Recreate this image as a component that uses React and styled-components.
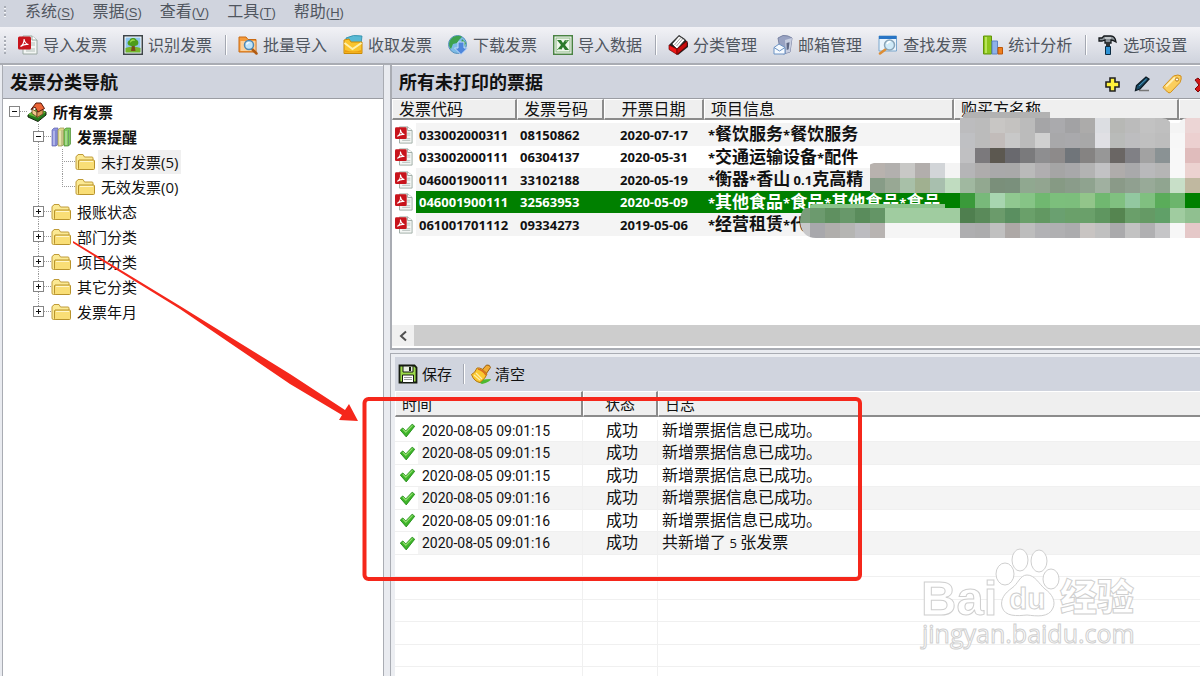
import React from 'react';
import styled, { createGlobalStyle, css } from 'styled-components';

const GlobalStyle = createGlobalStyle`
    * {
        box-sizing: border-box;
    }
    body {
        margin: 0;
        overflow: hidden;
        background: #fff;
        color: #111;
        font-family: "Open Sans", "Noto Sans CJK SC", sans-serif;
        font-size: 15px;
        line-height: 20px;
    }
    button {
        border: 0;
        padding: 0;
        background: none;
        color: inherit;
        font: inherit;
    }
`;

const Window = styled.div`
    position: relative;
    display: flex;
    flex-direction: column;
    height: 100vh;
    overflow: hidden;
    background: #e9ebf0;
`;

// Menu bar
const MenuBar = styled.nav`
    display: flex;
    align-items: center;
    flex-shrink: 0;
    height: 27px;
    padding: 0 4px 4px;
    background: #d0d4de;
    color: #50565f;
    font-size: 16px;
`;

const Grip = styled.span`
    width: 2px;
    height: ${(p) => p.$size}px;
    margin-right: ${(p) => p.$gap}px;
    background: repeating-linear-gradient(#a9adb6 0 2px, #f6f7f9 2px 3px, transparent 3px 4px);
`;

const MenuItem = styled.button`
    padding: 0 9px;
    white-space: nowrap;
`;

const MenuKey = styled.span`
    font-family: "Liberation Sans", sans-serif;
    font-size: 13px;
    u {
        text-underline-offset: 2px;
    }
`;

// Toolbar
const ToolBar = styled.div`
    display: flex;
    align-items: center;
    flex-shrink: 0;
    height: 38px;
    padding-left: 4px;
    border-bottom: 2px solid #a9acb3;
    background: linear-gradient(#f2f2f6, #cfd3dd);
    overflow: hidden;
`;

const ToolButton = styled.button`
    display: flex;
    flex-shrink: 0;
    align-items: center;
    gap: ${(p) => (p.$compact ? 4 : 5)}px;
    padding: 0 ${(p) => (p.$compact ? 3 : 8)}px;
    color: ${(p) => (p.$compact ? '#111' : '#50565f')};
    font-size: ${(p) => (p.$compact ? 15 : 16)}px;
    white-space: nowrap;
`;

const Separator = styled.span`
    flex-shrink: 0;
    width: 2px;
    height: 20px;
    margin: ${(p) => (p.$compact ? '0 3px 0 8px' : '0 3px 0 5px')};
    border-left: 1px solid #a4a8b2;
    border-right: 1px solid #fff;
`;

// Panels
const Workspace = styled.div`
    display: flex;
    flex: 1;
    min-height: 0;
`;

const SidePanel = styled.aside`
    display: flex;
    flex-direction: column;
    flex: 0 0 382px;
    margin-left: 2px;
    border: 1px solid #a9acb3;
    border-width: 0 1px;
    background: #fff;
`;

const PanelTitle = styled.header`
    display: flex;
    align-items: center;
    justify-content: space-between;
    flex-shrink: 0;
    height: 34px;
    padding-left: 7px;
    border-top: 1px solid #fff;
    border-bottom: 1px solid #9b9da3;
    background: #d0d4de;
    h2 {
        margin: 0;
        font-size: 18px;
        font-weight: bold;
        line-height: 24px;
    }
`;

const TitleTools = styled.div`
    display: flex;
    align-items: center;
    gap: 10px;
    margin-right: -12px;
    padding-top: 4px;
    button {
        display: flex;
    }
`;

const MainColumn = styled.main`
    display: flex;
    flex-direction: column;
    flex: 1;
    min-width: 0;
    gap: 3px;
    margin-left: 6px;
`;

const ListPanel = styled.section`
    position: relative;
    flex-shrink: 0;
    border-left: 2px solid #a9acb3;
    border-bottom: 2px solid #a9acb3;
    background: #fff;
    overflow: hidden;
`;

const LogPanel = styled.section`
    flex: 1;
    min-height: 0;
    padding: 3px 0 0 4px;
    border: 1px solid #a9acb3;
    border-width: 1px 0 0 1px;
    background: #eceef2;
    overflow: hidden;
`;

const LogBar = styled.div`
    display: flex;
    align-items: center;
    height: 34px;
    background: #d0d4de;
`;

// Tree
const Tree = styled.ul`
    margin: 0;
    padding: 0 0 0 6px;
    list-style: none;
`;

const TreeRow = styled.li`
    display: flex;
    align-items: center;
    height: 25px;
`;

const dotsDown = 'repeating-linear-gradient(#9a9a9a 0 1px, transparent 1px 2px)';
const dotsAcross = 'repeating-linear-gradient(90deg, #9a9a9a 0 1px, transparent 1px 2px)';

const Guide = styled.span`
    width: 24px;
    height: 25px;
    background: ${(p) => (p.$blank ? 'none' : `${dotsDown} 5px 0 / 1px 100% no-repeat`)};
`;

const Branch = styled.span`
    display: flex;
    align-items: center;
    width: 18px;
    height: 25px;
    background-repeat: no-repeat;
    background-image: ${dotsAcross}${(p) => (p.$line ? `, ${dotsDown}` : '')};
    background-position: 5px 12px, 5px 0;
    background-size: 13px 1px, 1px ${(p) => (p.$line === 'half' ? '12px' : '100%')};
`;

const Expander = styled.button`
    width: 11px;
    height: 11px;
    border: 1px solid #858585;
    background:
        linear-gradient(#111, #111) center / 5px 1px no-repeat,
        linear-gradient(#111, #111) center / ${(p) => (p.$open ? '0 0' : '1px 5px')} no-repeat,
        #fff;
`;

const TreeLabel = styled.span`
    margin-left: 3px;
    padding: 0 3px;
    font-weight: ${(p) => (p.$bold ? 'bold' : 'normal')};
    line-height: 24px;
    background: ${(p) => (p.$selected ? '#f0f0f0' : 'transparent')};
`;

const Latin = styled.span`
    font-size: 13px;
`;

// Tables
const ListView = styled.div`
    height: 226px;
    overflow: hidden;
`;

const DataTable = styled.table`
    width: 100%;
    border-collapse: separate;
    border-spacing: 0;
    table-layout: fixed;
    background: #fff;
    td, th {
        padding: 0;
        overflow: hidden;
        white-space: nowrap;
    }
`;

const HeadCell = styled.th`
    height: ${(p) => p.$height}px;
    border: 1px solid #fff;
    border-right: 2px solid #8b8b8b;
    border-bottom: 2px solid #8b8b8b;
    background: #efefef;
    font-size: ${(p) => p.$font}px;
    font-weight: normal;
    line-height: 16px;
    text-align: ${(p) => (p.$center ? 'center' : 'left')};
    && {
        padding-left: ${(p) => (p.$center ? 0 : 6)}px;
    }
    &:last-child {
        border-right: 0;
    }
`;

const Spacer = styled.tr`
    height: 3px;
`;

const TicketRow = styled.tr`
    height: 22px;
    font-size: 17px;
    font-weight: bold;
    &:nth-child(even) {
        height: 23px;
    }
    td {
        background: ${(p) => (p.$shade ? '#f4f4f4' : '#fff')};
        line-height: 20px;
    }
    td + td {
        padding-left: 4px;
    }
    ${(p) => p.$selected && css`
        color: #fff;
        td + td {
            background: #008000;
        }
    `}
`;

const IconCell = styled.td`
    && {
        background: #fff;
    }
    svg {
        display: block;
        margin-left: 3px;
    }
`;

const CodeCell = styled.td`
    && {
        padding-left: ${(p) => (p.$center ? 0 : 3)}px;
        font-size: 13px;
        text-align: ${(p) => (p.$center ? 'center' : 'left')};
    }
`;

const LogRow = styled.tr`
    height: 22px;
    font-size: 16px;
    &:nth-child(odd) {
        height: 23px;
    }
    td {
        padding: 0 0 2px 4px;
        border-bottom: 1px solid #f0f0f0;
        border-right: 1px solid #f0f0f0;
        background: ${(p) => (p.$shade ? '#f4f4f4' : '#fff')};
        line-height: 18px;
    }
    td:first-child, td:last-child {
        border-right: 0;
    }
`;

const CheckCell = styled.td`
    && {
        padding-bottom: 0;
        background: #fff;
    }
    svg {
        display: block;
    }
`;

const StatusCell = styled.td`
    text-align: center;
`;

const TimeCell = styled.td`
    && {
        padding-bottom: 0;
        font-family: Roboto, sans-serif;
        font-size: 14px;
    }
`;

const ScrollBar = styled.div`
    display: flex;
    height: 21px;
    margin-bottom: 2px;
    background: #cdcdcd;
    button {
        display: flex;
        align-items: center;
        justify-content: center;
        width: 22px;
        background: #f0f0f0;
    }
`;

// Layers above the panels
const Mosaic = styled.svg`
    position: absolute;
    left: 408px;
    top: 47px;
`;

const Annotation = styled.svg`
    position: absolute;
    left: 0;
    top: 0;
    pointer-events: none;
`;

const Watermark = styled.svg`
    position: absolute;
    right: 58px;
    bottom: 18px;
    pointer-events: none;
`;

// Icons
const Icon = ({ size = 20, children }) => (
    <svg width={size} height={size} viewBox="0 0 20 20" aria-hidden="true">{children}</svg>
);

const PdfIcon = ({ size }) => (
    <Icon size={size}>
        <path d="M5 1h9l5 4v14H5z" fill="#f3f6f4" stroke="#9aa8a2" />
        <path d="M14 1v4h5" fill="#fff" stroke="#9aa8a2" />
        <path d="M13 8h4M13 10h4M8 14h9M8 16h9" stroke="#b5c0bb" />
        <rect x="0" y="1.500" width="13" height="13" rx="1.500" fill="#c8141c" />
        <path d="M2.500 11.500C5 10 6.500 6.500 6 4c.5 3 2 5 4.500 5.500C8 9 5 9.800 2.500 11.500z" fill="none" stroke="#fff" strokeWidth="1.200" />
    </Icon>
);

const TreePictureIcon = () => (
    <Icon>
        <rect x=".75" y=".75" width="18.500" height="18.500" fill="#fff" stroke="#3d4549" strokeWidth="1.500" />
        <rect x="2.500" y="2.500" width="15" height="15" fill="#8ec5ee" />
        <path d="M2.500 13q7-3 15 0v4.500h-15z" fill="#77b52b" />
        <path d="M9 10h2.500l1 6h-4.500z" fill="#7a4a1c" />
        <path d="M10 3c3 0 3.500 2 3.500 2 2.500.5 2.500 5 0 5.500-2 1-5 1-7 0-2.500-.5-2.500-4.500 0-5 0 0 .5-2.500 3.500-2.500z" fill="#4c9c1c" />
        <path d="M9 4.500c2-.8 3 .5 3 1.500-2-.8-4 .5-5 2 0-2 .5-3 2-3.500z" fill="#9bdc4b" />
    </Icon>
);

const FolderSearchIcon = () => (
    <Icon>
        <path d="M1 2h7l2 2.500h8V17H1z" fill="#f49a3a" stroke="#c96a13" />
        <path d="M2.500 6h15v10h-15z" fill="#fbd09a" />
        <path d="M13.500 13.500l5 5" stroke="#b05a12" strokeWidth="2.500" strokeLinecap="round" />
        <circle cx="11" cy="10" r="4.500" fill="#bfe4fa" stroke="#4f88b4" strokeWidth="1.500" />
        <path d="M8.500 9.500q.8-2 3-2" fill="none" stroke="#fff" strokeWidth="1.200" />
    </Icon>
);

const InboxIcon = () => (
    <Icon>
        <path d="M3 3q7-4 16-2l-1 8H3z" fill="#58b9d4" stroke="#2a8ba8" strokeWidth=".8" />
        <path d="M1 5l5-1 2 3h11v11.500H1z" fill="#fbc52d" stroke="#c98a08" />
        <path d="M1.500 8l8 6 9-6" fill="none" stroke="#fff1ad" strokeWidth="2" />
        <path d="M2 17.500h16.500V15q-8 3-16.500 0z" fill="#eb9d10" />
    </Icon>
);

const GlobeIcon = () => (
    <Icon>
        <circle cx="9.500" cy="9.500" r="9" fill="#7dbbe6" stroke="#5690bd" />
        <path d="M3 4C6 0 12 0 14 2l-3 3-2 3-4 1-2 5C0 11 1 6 3 4zM14 4l4 4-2 4-3-4z" fill="#3da24f" />
        <path d="M10 7h6v6h3.500L13 19.500 6.500 13H10z" fill="#4f87dc" stroke="#c7dcf8" />
    </Icon>
);

const ExcelIcon = () => (
    <Icon>
        <rect x=".75" y=".75" width="18.500" height="18.500" fill="#fff" stroke="#4a8343" strokeWidth="1.500" />
        <rect x="3" y="3" width="14" height="14" fill="#eef6eb" stroke="#8bb883" />
        <path d="M4 5h4l2 3 2-3h4l-4 5 4 5h-4l-2-3-2 3H4l4-5z" fill="#2c7a2c" />
        <path d="M12.500 6h2M5 14.500h3" stroke="#b3dba9" />
    </Icon>
);

const CategoryIcon = () => (
    <Icon>
        <path d="M1 10L11 0l6 4 3 4v4l-10 8z" fill="#222" />
        <path d="M4 9l7-8 6 4-8 9z" fill="#fff" stroke="#333" strokeWidth=".8" />
        <path d="M6.500 10l6-7M8.500 11l6-7" stroke="#888" strokeWidth=".8" />
        <path d="M1 10l8 4v5.500l-8-5z" fill="#f01616" stroke="#6b0000" strokeWidth=".7" />
        <path d="M9 14l10-8v5l-10 8.500z" fill="#c80c0c" stroke="#6b0000" strokeWidth=".7" />
    </Icon>
);

const MailboxIcon = () => (
    <Icon>
        <path d="M5 3q5-4 10-2l4 2-2 14-7 2-3-5z" fill="#98a2c2" stroke="#7983a3" />
        <path d="M12 5l7-2-2 14-4 1z" fill="#c7cee0" />
        <path d="M13.500 8l3-.8-.8 7-2 .8z" fill="#5e6784" />
        <path d="M1 12.500l5-3.500 6 3.500V19H1z" fill="#f5faff" stroke="#6c93c4" />
        <path d="M1 12.500l5.500 3.500 5.500-3.500" fill="none" stroke="#6c93c4" />
    </Icon>
);

const FindIcon = () => (
    <Icon>
        <path d="M1 1h17.500v15H1z" fill="#eaf4fc" stroke="#7ba7cd" />
        <path d="M1 1h17.500v3H1z" fill="#2874c5" />
        <path d="M8 14l-6 4.500" stroke="#dd8d35" strokeWidth="2.500" strokeLinecap="round" />
        <circle cx="11.500" cy="10" r="5" fill="#cfeaf8" stroke="#8aa5b8" strokeWidth="1.500" />
        <path d="M9 9q1-2.500 3.500-2.500" fill="none" stroke="#fff" strokeWidth="1.500" />
    </Icon>
);

const ChartIcon = () => (
    <Icon>
        <path d="M.5 1h8v18h-8z" fill="#8bc51c" stroke="#619409" />
        <path d="M2 2h2v16H2z" fill="#b8e35a" />
        <path d="M9 6h5.500v13H9z" fill="#8eb1e8" stroke="#5d85c7" />
        <path d="M15 12.500h4.500V19H15z" fill="#ef7f1e" stroke="#bd5608" />
    </Icon>
);

const HammerIcon = () => (
    <Icon>
        <path d="M1 3h3l2-2h7q4 0 5 6-3-2-5-2v3H7V5L4 6H1z" fill="#8b9298" stroke="#15191c" strokeWidth="1.300" />
        <path d="M7 3h6" stroke="#e4e7e9" strokeWidth="1.200" />
        <path d="M8 8h4v4H8z" fill="#333" />
        <path d="M7.500 11.500h5v8h-5z" fill="#2f93d5" stroke="#0b2b42" />
    </Icon>
);

const HouseIcon = () => (
    <Icon>
        <path d="M1 13l9-6 9 3v3l-8 6.500L1 15z" fill="#247a1c" stroke="#16230f" />
        <path d="M1 12.500l9-6 9 3.500-8 6z" fill="#66bd35" />
        <path d="M5 7l5 3v5l-5-3.500z" fill="#f2c98d" stroke="#4c2d15" strokeWidth=".7" />
        <path d="M10 10l6-3v5l-6 3.500z" fill="#d9995a" stroke="#4c2d15" strokeWidth=".7" />
        <path d="M4 7.500L9 1h5l3.500 5.500L11 10 8 5z" fill="#ec6536" stroke="#581a0b" />
    </Icon>
);

const BooksIcon = () => (
    <Icon>
        <path d="M1 3l2-2h4v16l-2 2H1z" fill="#8f94df" stroke="#6165ae" strokeWidth=".7" />
        <path d="M7 3l2-2h4v16l-2 2H7z" fill="#dfd98b" stroke="#9c964e" strokeWidth=".7" />
        <path d="M13 3l2-2h4.500v16l-2 2H13z" fill="#7fc95d" stroke="#4a8b30" strokeWidth=".7" />
        <path d="M3 4v14M9 4v14M15 4v14" stroke="#fff" strokeOpacity=".6" />
        <path d="M5 3v16M11 3v16M17.500 3v16" stroke="#3b4680" strokeOpacity=".3" />
    </Icon>
);

const FolderIcon = () => (
    <Icon>
        <path d="M1 16V5q0-1 1-1l1-1.500h5L9.500 5H17q1 0 1 1v10.500q0 1-1 1H2.500q-1.500 0-1.500-1.500z" fill="#fbe993" stroke="#c09c38" />
        <path d="M4 8h14.500q1 0 1 1v7.500q0 1-1 1H4.500q-1 0-1-1V9z" fill="#f9de76" stroke="#b8932c" />
        <path d="M5 9.500h13" stroke="#fff6cc" />
    </Icon>
);

const SaveIcon = () => (
    <Icon>
        <path d="M1.500 1.500h15l2 2v15h-17z" fill="#9ddb4a" stroke="#151b10" strokeWidth="1.800" />
        <path d="M5 2h10v6H5z" fill="#e9efe2" stroke="#151b10" />
        <path d="M11 3h2v4h-2z" fill="#151b10" />
        <path d="M4.500 11h11v7.500h-11z" fill="#fff" stroke="#151b10" />
        <path d="M6 13.500h8M6 15.500h8" stroke="#999" />
    </Icon>
);

const BroomIcon = () => (
    <Icon>
        <path d="M5 17q6-2 15-2-1 3-9 5z" fill="#4db82f" />
        <path d="M11 6l4.500-5q3.500-.5 4 2.500L15 10z" fill="#f0ab34" stroke="#9c5e0b" />
        <path d="M6 4q5-1 10 6-1 4-7 8.500-6-1-8.500-8Q4 9 6 4z" fill="#fbc831" stroke="#b5760f" />
        <path d="M7 5q5 1 8 6" fill="none" stroke="#d96a20" strokeWidth="1.500" />
        <path d="M3 11l6 5M5 9l6 6" stroke="#fff0a8" strokeWidth="1.200" />
    </Icon>
);

const CheckIcon = () => (
    <Icon size={17}>
        <path d="M1.500 9.500l3-2.500 3.500 3.500L15.500 2.500l3 2.500L8.500 17.500z" fill="#3fb52a" stroke="#1f8a14" strokeLinejoin="round" />
        <path d="M4.500 8.500L8 12l8-8" fill="none" stroke="#93e070" strokeWidth="1.200" />
    </Icon>
);

const AddIcon = () => (
    <Icon>
        <path d="M8 4h5v4h4v5h-4v4H8v-4H4V8h4z" fill="#fff23a" stroke="#222" strokeWidth="1.600" />
    </Icon>
);

const EditIcon = () => (
    <Icon>
        <path d="M7 16.500h10" stroke="#777" strokeWidth="1.500" />
        <path d="M3.500 16.500l1-5L14 3l3 2-9 10z" fill="#174a66" stroke="#0c1a24" strokeWidth="1.300" />
        <path d="M7 12l7.500-7" stroke="#4c9bc2" />
    </Icon>
);

const TagIcon = () => (
    <Icon>
        <path d="M1.500 12.500L11.500 2q5-2 7.500 0 .8 3-1 6.500L8.500 18.500q-1.500 1-3-.5l-4-4q-.8-.8 0-1.500z" fill="#fbce5d" stroke="#d18f1b" />
        <path d="M4 12.500l9-9" stroke="#ffefb5" strokeWidth="2" />
        <circle cx="15" cy="5.500" r="1.600" fill="#fff" stroke="#b77a17" />
    </Icon>
);

const DeleteIcon = () => (
    <Icon>
        <path d="M3 6l3-2 4 4 4-4 3 2-4 5 4 4-3 3-4-4-4 4-3-3 4-4z" fill="#d31616" stroke="#7d0505" />
    </Icon>
);

const tools = [
    ['导入发票', PdfIcon],
    ['识别发票', TreePictureIcon],
    null,
    ['批量导入', FolderSearchIcon],
    ['收取发票', InboxIcon],
    ['下载发票', GlobeIcon],
    ['导入数据', ExcelIcon],
    null,
    ['分类管理', CategoryIcon],
    ['邮箱管理', MailboxIcon],
    ['查找发票', FindIcon],
    ['统计分析', ChartIcon],
    null,
    ['选项设置', HammerIcon],
];

const menus = [['系统', 'S'], ['票据', 'S'], ['查看', 'V'], ['工具', 'T'], ['帮助', 'H']];

const nodes = [
    { label: '所有发票', level: 0, icon: HouseIcon, open: true, bold: true },
    { label: '发票提醒', level: 1, icon: BooksIcon, open: true, bold: true },
    { label: '未打发票(5)', level: 2, selected: true },
    { label: '无效发票(0)', level: 2, last: true },
    { label: '报账状态', level: 1 },
    { label: '部门分类', level: 1 },
    { label: '项目分类', level: 1 },
    { label: '其它分类', level: 1 },
    { label: '发票年月', level: 1, last: true },
];

const tickets = [
    ['033002000311', '08150862', '2020-07-17', '*餐饮服务*餐饮服务'],
    ['033002000111', '06304137', '2020-05-31', '*交通运输设备*配件'],
    ['046001900111', '33102188', '2020-05-19', '*衡器*香山 0.1克高精'],
    ['046001900111', '32563953', '2020-05-09', '*其他食品*食品*其他食品*食品'],
    ['061001701112', '09334273', '2019-05-06', '*经营租赁*代'],
];

const logs = [
    ['2020-08-05 09:01:15', '新增票据信息已成功。'],
    ['2020-08-05 09:01:15', '新增票据信息已成功。'],
    ['2020-08-05 09:01:15', '新增票据信息已成功。'],
    ['2020-08-05 09:01:16', '新增票据信息已成功。'],
    ['2020-08-05 09:01:16', '新增票据信息已成功。'],
    ['2020-08-05 09:01:16', '共新增了 5 张发票'],
];

// Each entry: start column, one colour per 15px block, row
const blocks = [
    [4, 'b8b2ae b2b0ae c8c8c6 b2aeac d2d5d8 f4f4f4', 3],
    [4, '879c87 98a894 a8c0a8 a0b090 a8bfae c0dcc0', 4],
    [-1, '7a9c7a 6c9a6e 5f9060 68986a 5a8c5c 649566 a0cca0 a0cca0 a0cca0 a0cca0 a0cca0', 6],
    [-1, 'c8c8ca a8a8ac b0aeac b5b5b3 bcbcc0 b8b4b2 f5f5f5 f5f5f5 f5f5f5 f5f5f5 f5f5f5', 7],
    [10, 'bcbcbe bbbbbb c8c6c4 c4c2c0 bbbbbb a5a5a7 aaaaad a2a2a4 acabaa dcdee2 b7b8b5 bbbbbb c2c2c2 bfbfbf f4f4f4 ecd5d5', 0],
    [10, 'bfc0c3 bbbbbb c2bcba c8c8c8 bbbbbb d0d0d0 a8a8aa a9a9ac a8a8a8 e0e0e4 b9bbb9 bdbdbf c0c0c0 bdbdbd f7f7f7 ecd0d0', 1],
    [10, 'c0c0c2 7b797c 5c5850 69696e 7a7a7c 8e8e90 8d8a8a 70757a 858382 979797 6a6664 808085 a2a2a2 8a9294 f8f8f8 e0bcbc', 2],
    [10, 'b5b5b7 aeacac a9a9aa a9a9a9 bababa b0aeb0 a5a5a5 a8a8aa b3b3b3 c2c2c4 afacab a9a9ab b9b9bb b5b5b5 f8f8f8 ecd2d0', 3],
    [10, 'a0b8a0 92a890 7a8f7a 7a907c 90a890 92a590 869a84 8a9c8a 8fa38f a0b0a0 8a9a88 90a090 98aa98 90a590 c8dfc8 c0b8a0', 4],
    [9, '008000 3a9a3a 78b97a a8d5b0 90c890 86c486 70b870 7cbf7c 7cbe7c 92c58a 70b870 80c080 92c8a0 80c080 5aac5a 6cb56c 008000 40a04a', 5],
    [10, '4f7f4f 5a8a5a 6b9b6b 5a8f60 6aa06a 629862 6aa070 6aa06a 6aa06a 5f9660 558550 6a9f6a 659a65 60a068 a0cca0 90c090', 6],
    [10, 'aeaeb0 acacad c0c0c0 ada8a6 bdbdbd b2b2b5 b0b0b2 acacae c8c4c2 c0c0c0 aaaaac c2c2c2 b0b0b2 c5c5c7 f7f7f7 e5c8c8', 7],
];

// Chinese text is set larger than the Latin text beside it
const Mixed = ({ text }) => text.split(/([\x20-\x7e]+)/).map((part, i) => (
    i % 2 ? <Latin key={i}>{part}</Latin> : part
));

const TreeItem = ({ node }) => {
    const NodeIcon = node.icon || FolderIcon;
    return (
        <TreeRow>
            {node.level > 0 && <Guide $blank />}
            {node.level > 1 && <Guide />}
            <Branch $line={node.level > 0 && (node.last ? 'half' : 'full')}>
                {node.level < 2 && <Expander $open={node.open} aria-label={node.label} />}
            </Branch>
            <NodeIcon />
            <TreeLabel $bold={node.bold} $selected={node.selected}>{node.label}</TreeLabel>
        </TreeRow>
    );
};

const TicketTable = () => (
    <DataTable>
        <colgroup>
            <col width="24" />
            <col width="101" />
            <col width="87" />
            <col width="100" />
            <col width="250" />
            <col width="225" />
            <col />
        </colgroup>
        <thead>
            <tr>
                <HeadCell $height={21} $font={16} colSpan={2}>发票代码</HeadCell>
                <HeadCell $height={21} $font={16}>发票号码</HeadCell>
                <HeadCell $height={21} $font={16} $center>开票日期</HeadCell>
                <HeadCell $height={21} $font={16}>项目信息</HeadCell>
                <HeadCell $height={21} $font={16}>购买方名称</HeadCell>
                <HeadCell $height={21} $font={16} />
            </tr>
        </thead>
        <tbody>
            <Spacer />
            {tickets.map(([code, number, date, item], i) => (
                <TicketRow key={i} $shade={i % 2 === 0} $selected={i === 3}>
                    <IconCell><PdfIcon size={18} /></IconCell>
                    <CodeCell>{code}</CodeCell>
                    <CodeCell>{number}</CodeCell>
                    <CodeCell $center>{date}</CodeCell>
                    <td><Mixed text={item} /></td>
                    <td />
                    <td />
                </TicketRow>
            ))}
        </tbody>
    </DataTable>
);

const LogTable = () => (
    <DataTable>
        <colgroup>
            <col width="23" />
            <col width="165" />
            <col width="75" />
            <col />
        </colgroup>
        <thead>
            <tr>
                <HeadCell $height={26} $font={15} colSpan={2}>时间</HeadCell>
                <HeadCell $height={26} $font={15} $center>状态</HeadCell>
                <HeadCell $height={26} $font={15}>日志</HeadCell>
            </tr>
        </thead>
        <tbody>
            <Spacer />
            {logs.map(([time, message], i) => (
                <LogRow key={i} $shade={i % 2 === 1}>
                    <CheckCell><CheckIcon /></CheckCell>
                    <TimeCell>{time}</TimeCell>
                    <StatusCell>成功</StatusCell>
                    <td><Mixed text={message} /></td>
                </LogRow>
            ))}
            {[0, 1, 2, 3, 4, 5].map((n) => (
                <LogRow key={`empty${n}`}><td /><td /><td /><td /></LogRow>
            ))}
        </tbody>
    </DataTable>
);

const App = () => {
    return (
        <Window>
            <GlobalStyle />
            <MenuBar>
                <Grip $size={12} $gap={10} />
                {menus.map(([label, key]) => (
                    <MenuItem key={label}>{label}<MenuKey>(<u>{key}</u>)</MenuKey></MenuItem>
                ))}
            </MenuBar>
            <ToolBar>
                <Grip $size={18} $gap={4} />
                {tools.map((tool, i) => {
                    if (!tool) return <Separator key={i} />;
                    const [label, ToolIcon] = tool;
                    return <ToolButton key={i}><ToolIcon />{label}</ToolButton>;
                })}
            </ToolBar>
            <Workspace>
                <SidePanel>
                    <PanelTitle><h2>发票分类导航</h2></PanelTitle>
                    <Tree>
                        {nodes.map((node) => <TreeItem key={node.label} node={node} />)}
                    </Tree>
                </SidePanel>
                <MainColumn>
                    <ListPanel>
                        <PanelTitle>
                            <h2>所有未打印的票据</h2>
                            <TitleTools>
                                <button aria-label="添加"><AddIcon /></button>
                                <button aria-label="编辑"><EditIcon /></button>
                                <button aria-label="标签"><TagIcon /></button>
                                <button aria-label="删除"><DeleteIcon /></button>
                            </TitleTools>
                        </PanelTitle>
                        <ListView><TicketTable /></ListView>
                        <ScrollBar>
                            <button aria-label="向左滚动">
                                <svg width="10" height="12" viewBox="0 0 10 12">
                                    <path d="M8 1.500L3 6l5 4.500" fill="none" stroke="#505050" strokeWidth="2" />
                                </svg>
                            </button>
                        </ScrollBar>
                        <Mosaic width="400" height="126" aria-hidden="true">
                            <defs>
                                <clipPath id="smudge">
                                    <path d="M163 6V4q2-4 8-4h79v6h112q9 0 11 12l4 0q2-12 10-12h13v120H16q-14 0-16-16 0-16 14-18h131V81H76q-12 0-14-14 2-14 12-16h86V6z" />
                                </clipPath>
                            </defs>
                            <g clipPath="url(#smudge)" shapeRendering="crispEdges">
                                <rect x="160" y="0" width="90" height="6" fill="#b2b2b2" />
                                <rect x="10" y="92" width="135" height="4" fill="#8cc48c" />
                                {blocks.map(([start, colors, row]) => colors.split(' ').map((color, i) => (
                                    <rect key={`${row}-${start + i}`} x={(start + i) * 15 + 10} y={row * 15 + 6} width="15" height="15" fill={`#${color}`} />
                                )))}
                            </g>
                        </Mosaic>
                    </ListPanel>
                    <LogPanel>
                        <LogBar>
                            <ToolButton $compact><SaveIcon />保存</ToolButton>
                            <Separator $compact />
                            <ToolButton $compact><BroomIcon />清空</ToolButton>
                        </LogBar>
                        <LogTable />
                    </LogPanel>
                </MainColumn>
            </Workspace>
            <Watermark width="224" height="112" viewBox="916 546 224 112" fill="#fff" stroke="#cfcfcf" aria-hidden="true">
                <g fontFamily="Liberation Sans, sans-serif" fontWeight="bold">
                    <text x="919" y="615" fontSize="49">Bai</text>
                    <ellipse cx="1003" cy="574" rx="9" ry="11" />
                    <ellipse cx="1018" cy="560" rx="8" ry="11" />
                    <ellipse cx="1037" cy="561" rx="8" ry="11" />
                    <ellipse cx="1049" cy="579" rx="8" ry="10" />
                    <path d="M1025 575c8 0 12 9 18 14 7 5 11 12 8 19-4 10-17 8-26 7-10 1-22 2-25-8-2-8 3-14 10-19 6-4 8-13 15-13z" />
                    <text x="1007" y="609" fontSize="30">du</text>
                </g>
                <text x="1058" y="611" fontSize="37" fontWeight="900" fontFamily="Noto Sans CJK SC, sans-serif">经验</text>
                <text x="920" y="643" fontSize="25" fontFamily="Open Sans, sans-serif">jingyan.baidu.com</text>
            </Watermark>
            <Annotation width="870" height="590" aria-hidden="true">
                <path d="M73 241L180 306 290 374 345 410 349 404 358 421 339 420 342 415 290 384 180 309 73 243z" fill="#f5271b" />
                <rect x="364.500" y="399" width="495.500" height="180" rx="4" fill="none" stroke="#f5271b" strokeWidth="4" />
            </Annotation>
        </Window>
    );
};

export default App;
